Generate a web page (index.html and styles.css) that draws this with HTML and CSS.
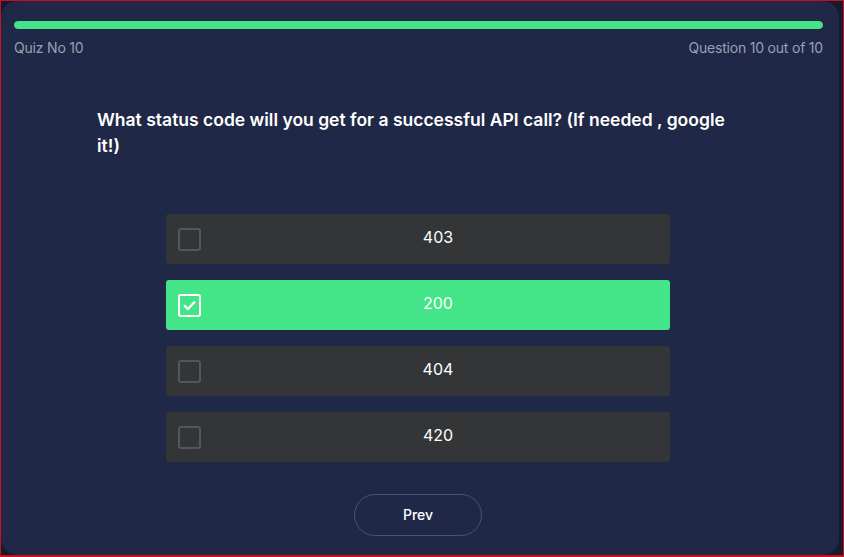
FILE: index.html
```html
<!DOCTYPE html>
<html lang="en">
<head>
<meta charset="utf-8">
<title>Quiz</title>
<link rel="stylesheet" href="styles.css">
</head>
<body>
<div class="frame">
  <main class="card">
    <div class="progress"><div class="progress-fill"></div></div>
    <div class="meta">
      <span>Quiz No 10</span>
      <span>Question 10 out of 10</span>
    </div>
    <h1 class="question">What status code will you get for a successful API call? (If needed , google it!)</h1>
    <ul class="options">
      <li class="option"><span class="box"></span><span class="label">403</span></li>
      <li class="option selected"><span class="box"><svg viewBox="0 0 22 22" width="22" height="22"><path d="M5.5 11.5l3.8 3.6L16.5 7.2" fill="none" stroke="#fff" stroke-width="2.8" stroke-linecap="round" stroke-linejoin="round"/></svg></span><span class="label">200</span></li>
      <li class="option"><span class="box"></span><span class="label">404</span></li>
      <li class="option"><span class="box"></span><span class="label">420</span></li>
    </ul>
    <div class="nav">
      <button class="btn">Prev</button>
    </div>
  </main>
</div>
</body>
</html>
```
FILE: styles.css
```css
* { box-sizing: border-box; }
html, body { margin: 0; padding: 0; }
body {
  font-family: "Inter", "Noto Sans", sans-serif;
  background: #c8101e;
}
.frame {
  width: 844px;
  height: 557px;
  border: 1px solid #c8101e;
  border-bottom-width: 2px;
  background: #151a2c;
  padding: 0 4px 0 0;
}
.card {
  height: 100%;
  background: #1f2846;
  border-radius: 16px;
  padding: 20px 16px 0 13px;
  display: flex;
  flex-direction: column;
}
.progress {
  height: 8px;
  border-radius: 4px;
  background: #2b3556;
  overflow: hidden;
}
.progress-fill {
  width: 100%;
  height: 100%;
  background: #44e589;
  border-radius: 4px;
}
.meta {
  display: flex;
  justify-content: space-between;
  margin-top: 10px;
  font-size: 14px;
  color: #9aa0b4;
  letter-spacing: -0.2px;
}
.question {
  margin: 51px 0 0 83px;
  width: 645px;
  font-size: 17.5px;
  line-height: 26px;
  font-weight: 600;
  color: #ffffff;
}
.options {
  list-style: none;
  margin: 55px 0 0 0;
  padding: 0;
  display: flex;
  flex-direction: column;
  align-items: center;
  gap: 16px;
}
.option {
  width: 504px;
  height: 50px;
  margin-right: 1px;
  background: #333537;
  border-radius: 3px;
  display: flex;
  align-items: center;
  padding-left: 12px;
}
.option.selected { background: #44e589; }
.box {
  width: 23px;
  height: 23px;
  border: 2px solid #54575a;
  border-radius: 3px;
  display: flex;
  align-items: center;
  justify-content: center;
}
.box svg { width: 19px; height: 19px; }
.selected .box { border-color: #ffffff; }
.label {
  flex: 1;
  text-align: center;
  font-size: 16px;
  line-height: 16px;
  padding: 0 0 4px 5px;
  color: #ffffff;
}
.nav {
  margin-top: 32px;
  display: flex;
  justify-content: center;
}
.btn {
  width: 128px;
  height: 42px;
  margin-right: 1px;
  padding-bottom: 2px;
  border-radius: 21px;
  border: 1px solid #4b5271;
  background: transparent;
  color: #ffffff;
  font-family: "Inter", "Noto Sans", sans-serif;
  font-size: 14px;
  font-weight: 500;
}
```
